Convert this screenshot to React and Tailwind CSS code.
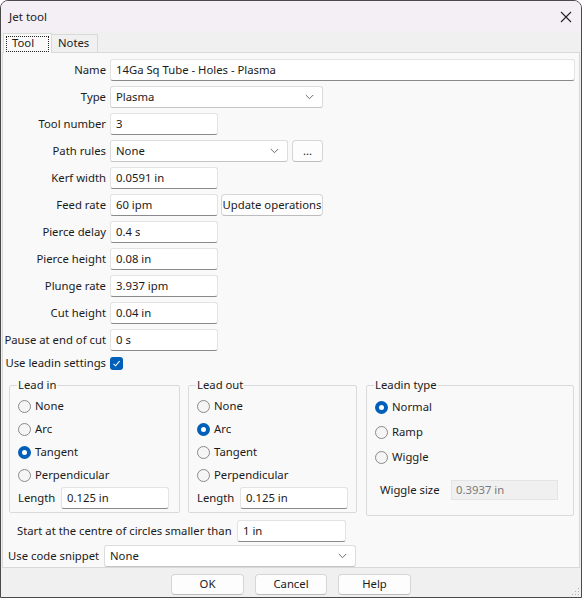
import { useState } from 'react';

const font = { fontFamily: '"Noto Sans", "Open Sans", sans-serif' };

function TextBox({ value, w }) {
  return (
    <div
      className="flex h-[22px] items-center rounded-[3px] border border-[#e3e3e3] border-b-[#8a8a8a] bg-white px-[5px] text-[#1b1b1b]"
      style={{ width: w }}
    >
      <span className="truncate whitespace-nowrap">{value}</span>
    </div>
  );
}

function Chevron() {
  return (
    <svg width="9" height="6" viewBox="0 0 9 6" className="shrink-0">
      <path d="M0.8 1 L4.5 4.7 L8.2 1" fill="none" stroke="#6a6a6a" strokeWidth="1" />
    </svg>
  );
}

function Select({ value, w }) {
  return (
    <div
      className="flex h-[22px] items-center justify-between rounded-[3px] border border-[#dcdcdc] border-b-[#c4c4c4] bg-white pl-[5px] pr-[8px] text-[#1b1b1b]"
      style={{ width: w }}
    >
      <span>{value}</span>
      <Chevron />
    </div>
  );
}

function Button({ children, w, h = 22 }) {
  return (
    <div
      className="flex items-center justify-center whitespace-nowrap rounded-[4px] border border-[#d6d6d6] border-b-[#bcbcbc] bg-[#fdfdfd] text-[#1b1b1b]"
      style={{ width: w, height: h }}
    >
      {children}
    </div>
  );
}

function Row({ label, children }) {
  return (
    <div className="flex h-[22px] items-center gap-[4px]">
      <div className="w-[103px] whitespace-nowrap text-right">{label}</div>
      {children}
    </div>
  );
}

function Radio({ checked, label, h }) {
  return (
    <div className="flex items-center gap-[4px] whitespace-nowrap" style={{ height: h }}>
      {checked ? (
        <div className="flex h-[13px] w-[13px] items-center justify-center rounded-full bg-[#005fb8]">
          <div className="h-[5px] w-[5px] rounded-full bg-white" />
        </div>
      ) : (
        <div className="h-[13px] w-[13px] rounded-full border border-[#8a8a8a] bg-[#f5f5f5]" />
      )}
      <span>{label}</span>
    </div>
  );
}

function Group({ title, w, children, className = '' }) {
  return (
    <fieldset className={`rounded-[2px] border border-[#dadada] pl-[8px] ${className}`} style={{ width: w }}>
      <legend className="-ml-[1px] px-[1px] leading-[16px]">{title}</legend>
      {children}
    </fieldset>
  );
}

export default function App() {
  const [tab] = useState('tool');
  const lead = ['None', 'Arc', 'Tangent', 'Perpendicular'];

  return (
    <div
      className="flex h-[598px] w-[582px] flex-col overflow-hidden rounded-t-[8px] border border-[#4a4a4a] bg-[#f0f0f0] text-[11.3px] text-[#1b1b1b]"
      style={font}
    >
      {/* title bar */}
      <div className="flex h-[31px] shrink-0 items-center justify-between bg-[#f4eef5] pl-[8px] pr-[9px] text-[11.6px]">
        <span>Jet tool</span>
        <svg width="12" height="12" viewBox="0 0 12 12">
          <path d="M1 1 L11 11 M11 1 L1 11" stroke="#222" strokeWidth="1.1" />
        </svg>
      </div>

      {/* tabs */}
      <div className="flex h-[20px] shrink-0 items-end pl-[2px]">
        <div className="relative z-10 -mb-px flex h-[20px] w-[49px] items-center border border-b-0 border-[#d9d9d9] bg-[#f9f9f9] px-[2px]">
          <span className="flex h-[16px] w-full items-center border border-dotted border-[#222] pl-[5px] text-[#1b1b1b]">
            {tab === 'tool' ? 'Tool' : 'Tool'}
          </span>
        </div>
        <div className="flex h-[18px] w-[46px] items-center border border-b-0 border-l-0 border-[#d9d9d9] pl-[6px]">
          Notes
        </div>
      </div>

      {/* panel */}
      <div className="mx-[1px] flex flex-1 flex-col border border-[#d9d9d9] bg-[#f9f9f9] pt-[6px]">
        <div className="flex flex-col gap-[5px]">
          <Row label="Name">
            <TextBox value="14Ga Sq Tube - Holes - Plasma" w={465} />
          </Row>
          <Row label="Type">
            <Select value="Plasma" w={213} />
          </Row>
          <Row label="Tool number">
            <TextBox value="3" w={108} />
          </Row>
          <Row label="Path rules">
            <Select value="None" w={178} />
            <Button w={31}>...</Button>
          </Row>
          <Row label="Kerf width">
            <TextBox value="0.0591 in" w={108} />
          </Row>
          <Row label="Feed rate">
            <TextBox value="60 ipm" w={108} />
            <div className="-ml-[1px]">
              <Button w={102}>Update operations</Button>
            </div>
          </Row>
          <Row label="Pierce delay">
            <TextBox value="0.4 s" w={108} />
          </Row>
          <Row label="Pierce height">
            <TextBox value="0.08 in" w={108} />
          </Row>
          <Row label="Plunge rate">
            <TextBox value="3.937 ipm" w={108} />
          </Row>
          <Row label="Cut height">
            <TextBox value="0.04 in" w={108} />
          </Row>
          <Row label="Pause at end of cut">
            <TextBox value="0 s" w={108} />
          </Row>
        </div>

        <div className="mt-[6px] flex h-[13px] items-center gap-[4px]">
          <div className="w-[103px] whitespace-nowrap text-right">Use leadin settings</div>
          <div className="flex h-[13px] w-[13px] items-center justify-center rounded-[3px] bg-[#005fb8]">
            <svg width="9" height="9" viewBox="0 0 9 9">
              <path d="M1.5 4.8 L3.6 6.8 L7.6 2.2" fill="none" stroke="white" strokeWidth="1.1" />
            </svg>
          </div>
        </div>

        <div className="mt-[7px] flex items-start gap-[8px] pl-[6px]">
          {[
            { title: 'Lead in', w: 171, sel: 'Tangent' },
            { title: 'Lead out', w: 169, sel: 'Arc' },
          ].map((g) => (
            <Group key={g.title} title={g.title} w={g.w} className="pb-[3px]">
              <div className="pt-[2px]">
                {lead.map((l) => (
                  <Radio key={l} label={l} checked={l === g.sel} h={23} />
                ))}
                <div className="flex h-[22px] items-center">
                  <div className="w-[43px]">Length</div>
                  <TextBox value="0.125 in" w={108} />
                </div>
              </div>
            </Group>
          ))}
          <div className="ml-[1px]">
            <Group title="Leadin type" w={208} className="pb-[15px]">
              <div className="pt-[2px]">
                <Radio label="Normal" checked h={25} />
                <Radio label="Ramp" h={25} />
                <Radio label="Wiggle" h={25} />
                <div className="mt-[10px] flex h-[20px] items-center pl-[5px]">
                  <div className="w-[71px] whitespace-nowrap">Wiggle size</div>
                  <div className="flex h-[20px] w-[107px] items-center border border-[#e4e4e4] bg-[#f0f0f0] px-[4px] text-[#7a7a7a]">
                    0.3937 in
                  </div>
                </div>
              </div>
            </Group>
          </div>
        </div>

        <div className="mt-[4px] flex h-[22px] items-center pl-[14px]">
          <div className="w-[220px] whitespace-nowrap">Start at the centre of circles smaller than</div>
          <TextBox value="1 in" w={109} />
        </div>
        <div className="mt-[3px] flex h-[22px] items-center pl-[5px]">
          <div className="w-[96px] whitespace-nowrap">Use code snippet</div>
          <Select value="None" w={252} />
        </div>
      </div>

      {/* buttons */}
      <div className="relative flex h-[29px] shrink-0 items-start justify-center gap-[11px] pt-[6px]">
        <Button w={73} h={21}>OK</Button>
        <Button w={72} h={21}>Cancel</Button>
        <Button w={73} h={21}>Help</Button>
        <svg width="8" height="8" viewBox="0 0 8 8" className="absolute bottom-[1px] right-[1px]">
          <g fill="#b0b0b0">
            <rect x="6" y="0" width="1" height="1" />
            <rect x="3" y="3" width="1" height="1" />
            <rect x="6" y="3" width="1" height="1" />
            <rect x="0" y="6" width="1" height="1" />
            <rect x="3" y="6" width="1" height="1" />
            <rect x="6" y="6" width="1" height="1" />
          </g>
        </svg>
      </div>
    </div>
  );
}
